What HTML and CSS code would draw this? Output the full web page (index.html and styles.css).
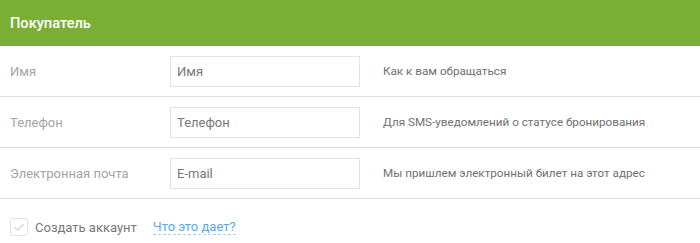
FILE: index.html
```html
<!DOCTYPE html>
<html lang="ru">
<head>
  <meta charset="UTF-8">
  <title>Покупатель</title>
  <link rel="stylesheet" href="styles.css">
</head>
<body>
  <div class="buyer">
    <div class="buyer-header">Покупатель</div>

    <div class="field-row">
      <label class="field-label">Имя</label>
      <input class="field-input" type="text" value="Имя">
      <div class="field-hint">Как к вам обращаться</div>
    </div>

    <div class="field-row">
      <label class="field-label">Телефон</label>
      <input class="field-input" type="text" value="Телефон">
      <div class="field-hint">Для SMS-уведомлений о статусе бронирования</div>
    </div>

    <div class="field-row">
      <label class="field-label">Электронная почта</label>
      <input class="field-input" type="text" value="E-mail">
      <div class="field-hint">Мы пришлем электронный билет на этот адрес</div>
    </div>

    <div class="account-row">
      <span class="checkbox">
        <svg width="12" height="10" viewBox="0 0 12 10">
          <path d="M1.5 5.2 L4.6 8.2 L10.5 1.8" fill="none" stroke="#d9d9d9" stroke-width="1.6"/>
        </svg>
      </span>
      <span class="account-label">Создать аккаунт</span>
      <a class="account-link" href="#">Что это дает?</a>
    </div>
  </div>
</body>
</html>
```

FILE: styles.css
```css
body {
  margin: 0;
  background: #fff;
  font-family: Roboto, "Liberation Sans", Arial, sans-serif;
}

.buyer {
  width: 700px;
}

.buyer-header {
  height: 46px;
  line-height: 46px;
  padding-left: 10px;
  background: #7aaf33;
  color: #fff;
  font-size: 14.6px;
  font-weight: 500;
}

.field-row {
  display: grid;
  grid-template-columns: 160px 190px 1fr;
  align-items: center;
  height: 50px;
  padding-left: 10px;
  border-bottom: 1px solid #dcdcdc;
}

.field-label {
  font-size: 13px;
  color: #a3a3a3;
}

.field-input {
  box-sizing: border-box;
  width: 190px;
  height: 31px;
  margin-top: 1px;
  padding: 0 6px;
  border: 1px solid #e3e3e3;
  font-family: inherit;
  font-size: 13px;
  font-weight: 400;
  color: #777;
  outline: none;
}

.field-hint {
  margin-left: 23px;
  font-size: 11.7px;
  color: #707070;
}

.account-row {
  display: flex;
  align-items: center;
  padding: 19px 0 0 10px;
}

.checkbox {
  box-sizing: border-box;
  width: 18px;
  height: 18px;
  border: 1px solid #e3e3e3;
  border-radius: 3px;
  display: flex;
  justify-content: center;
  align-items: center;
}

.account-label {
  margin-left: 7px;
  font-size: 13px;
  color: #777;
}

.account-link {
  margin-left: 16px;
  font-size: 13px;
  color: #5aa9e6;
  text-decoration: none;
  border-bottom: 1px dashed #a9d1f1;
}
```
